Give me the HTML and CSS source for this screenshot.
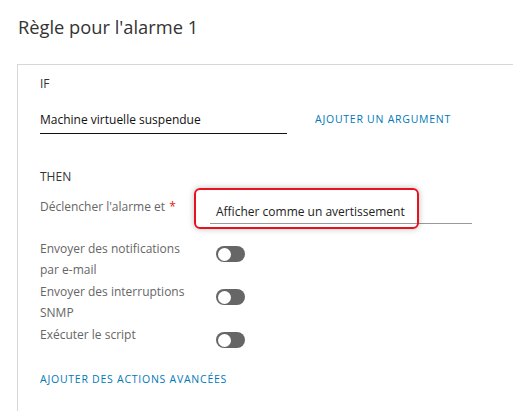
FILE: index.html
```html
<!DOCTYPE html>
<html lang="fr">
<head>
<meta charset="utf-8">
<link rel="stylesheet" href="styles.css">
</head>
<body>
<h1 class="title">Règle pour l'alarme 1</h1>
<section class="panel">
  <div class="section-label">IF</div>
  <div class="if-row">
    <div class="if-field">Machine virtuelle suspendue</div>
    <a class="link">AJOUTER UN ARGUMENT</a>
  </div>
  <div class="section-label then">THEN</div>
  <div class="form">
    <div class="label">Déclencher l'alarme et <span class="req">*</span></div>
    <div class="control select-cell">
      <div class="select">Afficher comme un avertissement</div>
      <div class="highlight"></div>
    </div>
    <div class="label">Envoyer des notifications par e-mail</div>
    <div class="control toggle-cell"><span class="toggle"></span></div>
    <div class="label">Envoyer des interruptions SNMP</div>
    <div class="control toggle-cell"><span class="toggle"></span></div>
    <div class="label">Exécuter le script</div>
    <div class="control toggle-cell"><span class="toggle"></span></div>
  </div>
  <a class="link advanced">AJOUTER DES ACTIONS AVANCÉES</a>
</section>
</body>
</html>
```

FILE: styles.css
```css
html, body {
  margin: 0;
  padding: 0;
  background: #fff;
  overflow: hidden;
}
body {
  font-family: "Open Sans", "Noto Sans", sans-serif;
  color: #333;
  width: 513px;
  height: 411px;
}
.title {
  margin: 0;
  padding: 15px 0 0 18px;
  height: 64px;
  box-sizing: border-box;
  font-size: 18.3px;
  font-weight: 400;
  line-height: 24px;
  color: #333;
}
.panel {
  margin-left: 17px;
  width: 496px;
  height: 347px;
  box-sizing: border-box;
  border-top: 1px solid #d7d7d7;
  border-left: 1px solid #d7d7d7;
  padding: 10px 0 0 22px;
}
.section-label {
  font-size: 12px;
  line-height: 18px;
  color: #333;
}
.section-label.then {
  margin-top: 34px;
}
.if-row {
  display: flex;
  align-items: flex-start;
  margin-top: 18px;
}
.if-field {
  width: 247px;
  box-sizing: border-box;
  font-size: 12px;
  line-height: 18px;
  color: #111;
  padding-bottom: 4px;
  border-bottom: 1px solid #111;
}
.link {
  font-size: 10.5px;
  letter-spacing: 0.75px;
  color: #0079b8;
  line-height: 18px;
  text-decoration: none;
}
.if-row .link {
  margin-left: 28px;
  margin-top: -1px;
}
.form {
  display: grid;
  grid-template-columns: 176px 270px;
  row-gap: 1px;
  margin-top: 10px;
}
.label {
  font-size: 12px;
  line-height: 21px;
  color: #666;
  width: 150px;
}
.req {
  color: #e12200;
  margin-left: 1px;
}
.control {
  position: relative;
}
.select-cell {
  padding-bottom: 13px;
}
.select {
  margin-left: -6px;
  margin-top: 7px;
  width: 262px;
  box-sizing: border-box;
  padding: 0 0 2px 6px;
  font-size: 12px;
  line-height: 18px;
  color: #222;
  border-bottom: 1px solid #999;
}
.highlight {
  position: absolute;
  left: -22px;
  top: -8px;
  width: 225px;
  height: 41px;
  box-sizing: border-box;
  border: 2px solid #e8121f;
  border-radius: 6px;
  box-shadow: 0 0 6px rgba(0,0,0,0.25);
  pointer-events: none;
}
.toggle-cell {
  padding-top: 8px;
}
.toggle {
  display: block;
  width: 29px;
  height: 16px;
  border-radius: 8px;
  background: #666;
  position: relative;
}
.toggle::after {
  content: "";
  position: absolute;
  left: 1.5px;
  top: 1.5px;
  width: 13px;
  height: 13px;
  border-radius: 50%;
  background: #fff;
}
.advanced {
  display: block;
  margin-top: 22px;
}
```
